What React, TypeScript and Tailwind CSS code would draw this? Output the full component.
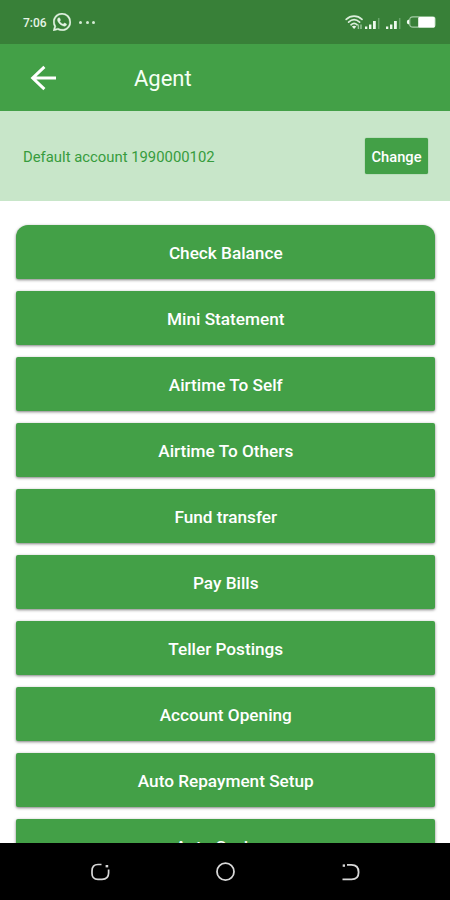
const actions = [
  "Check Balance",
  "Mini Statement",
  "Airtime To Self",
  "Airtime To Others",
  "Fund transfer",
  "Pay Bills",
  "Teller Postings",
  "Account Opening",
  "Auto Repayment Setup",
  "Auto Savings",
];

function WhatsAppIcon() {
  return (
    <svg className="ml-[6px] h-[18px] w-[18px]" viewBox="0 0 24 24" fill="#e3f3e3" stroke="#e3f3e3" strokeWidth="0.5">
      <path d="M17.472 14.382c-.297-.149-1.758-.867-2.03-.967-.273-.099-.471-.148-.67.15-.197.297-.767.966-.94 1.164-.173.199-.347.223-.644.075-.297-.15-1.255-.463-2.39-1.475-.883-.788-1.48-1.761-1.653-2.059-.173-.297-.018-.458.13-.606.134-.133.298-.347.446-.52.149-.174.198-.298.298-.497.099-.198.05-.371-.025-.52-.075-.149-.669-1.612-.916-2.207-.242-.579-.487-.5-.669-.51-.173-.008-.371-.01-.57-.01-.198 0-.52.074-.792.372-.272.297-1.04 1.016-1.04 2.479 0 1.462 1.065 2.875 1.213 3.074.149.198 2.096 3.2 5.077 4.487.709.306 1.262.489 1.694.625.712.227 1.36.195 1.871.118.571-.085 1.758-.719 2.006-1.413.248-.694.248-1.289.173-1.413-.074-.124-.272-.198-.57-.347m-5.421 7.403h-.004a9.87 9.87 0 01-5.031-1.378l-.361-.214-3.741.982.998-3.648-.235-.374a9.86 9.86 0 01-1.51-5.26c.001-5.45 4.436-9.884 9.888-9.884 2.64 0 5.122 1.03 6.988 2.898a9.825 9.825 0 012.893 6.994c-.003 5.45-4.437 9.884-9.885 9.884m8.413-18.297A11.815 11.815 0 0012.05 0C5.495 0 .16 5.335.157 11.892c0 2.096.547 4.142 1.588 5.945L.057 24l6.305-1.654a11.882 11.882 0 005.683 1.448h.005c6.554 0 11.89-5.335 11.893-11.893a11.821 11.821 0 00-3.48-8.413z" />
    </svg>
  );
}

function StatusIcons() {
  return (
    <svg className="mt-px h-[18px] w-[94px]" viewBox="0 0 94 18" fill="none">
      <g stroke="#dceedc" strokeWidth="1.7" strokeLinecap="round">
        <path d="M1.2 5.3C5.8 1 12.4 1 17 5.3" />
        <path d="M3.6 8.1C7 5 11.2 5 14.6 8.1" />
        <path d="M6 10.8C8 9 10.2 9 12.2 10.8" />
      </g>
      <path d="M6.9 12.6Q9.1 10.7 11.3 12.6L9.1 15.1Z" fill="#e8f5e8" />
      <path d="M13.4 10.5V15M16 10.5V15" stroke="#9cc69e" strokeWidth="1.4" />
      <g fill="#edf8ed">
        <path d="M20 12.5h2.3V15H20zM24 10.5h2.4V15H24zM28 7h2.8v8H28z" />
        <path d="M41 12.5h2.3V15H41zM45 10.5h2.4V15H45zM49 7h2.8v8H49z" />
      </g>
      <path d="M33.7 4V15M54.7 4V15" stroke="#68a46a" strokeWidth="1.5" />
      <path d="M68 2.8H87.5Q90 2.8 90 5.3V10.7Q90 13.2 87.5 13.2H68Q64.7 13.2 64.7 10V6Q64.7 2.8 68 2.8Z" stroke="#a4cba5" strokeWidth="1.2" />
      <path d="M64 5.4Q61.8 5.8 61.8 8Q61.8 10.2 64 10.6Z" fill="#f5fff5" />
      <rect x="73.2" y="3" width="16.6" height="10.6" rx="1.4" fill="#fff" />
    </svg>
  );
}

function NavigationBar() {
  return (
    <nav className="flex h-[57px] shrink-0 items-center justify-between bg-black px-[90px]">
      <svg className="h-5 w-5" viewBox="0 0 20 20" fill="none" stroke="#d8d8d8" strokeWidth="1.7">
        <path d="M11.5 2.5H8Q2 2.5 2 9V11.5Q2 17.3 8 17.3H12Q18.6 17.3 18.6 11V7.5" />
        <path d="M15.6 4.2H18.2" strokeWidth="2.4" />
      </svg>
      <svg className="h-5 w-5" viewBox="0 0 20 20" fill="none" stroke="#d8d8d8" strokeWidth="1.8">
        <circle cx="10.5" cy="9.7" r="8.5" />
      </svg>
      <svg className="h-5 w-5" viewBox="0 0 20 20" fill="none" stroke="#d8d8d8" strokeWidth="1.8">
        <path d="M7 2.8H11.5Q18.6 2.8 18.6 10.2Q18.6 17.3 11.5 17.3H2.5" />
        <path d="M2.7 3.6H5" strokeWidth="2.4" />
      </svg>
    </nav>
  );
}

export default function App() {
  return (
    <div className="flex h-[900px] w-[450px] flex-col overflow-hidden bg-white font-[Roboto,sans-serif]">
      <div className="flex h-11 shrink-0 items-center justify-between bg-[#388038] pr-[11px] pl-[23px]">
        <div className="flex items-center">
          <span className="w-6 pt-0.5 text-[12px] font-medium whitespace-nowrap text-[#e6f4e6]">7:06</span>
          <WhatsAppIcon />
          <div className="ml-2 flex gap-[3.5px]">
            <i className="h-[3px] w-[3px] rounded-full bg-[#d4ebd4]" />
            <i className="h-[3px] w-[3px] rounded-full bg-[#d4ebd4]" />
            <i className="h-[3px] w-[3px] rounded-full bg-[#d4ebd4]" />
          </div>
        </div>
        <StatusIcons />
      </div>
      <header className="flex h-[67px] shrink-0 items-center bg-[#43a047] pl-[30px]">
        <svg className="h-[26px] w-[27px]" viewBox="0 0 27 26" fill="none" stroke="#fff" strokeWidth="3">
          <path d="M14.4 1.8L2.7 13L14.4 24.2M2.7 13H26" />
        </svg>
        <h1 className="ml-[77px] pt-0.5 text-[22px] leading-none text-[#f5fff5]">Agent</h1>
      </header>
      <section className="flex h-[90px] shrink-0 items-center justify-between bg-[#c8e6c9] pr-[22px] pl-[23px]">
        <p className="pt-[3px] text-[14.85px] text-[#379c3d]">Default account 1990000102</p>
        <button className="h-9 w-[63px] rounded-[2px] bg-[#43a047] pt-0.5 text-[14.7px] font-medium text-white shadow-[0_0_1px_#388e3c]">
          Change
        </button>
      </section>
      <main className="flex min-h-0 flex-1 flex-col gap-3 overflow-hidden px-[15.5px] pt-6">
        {actions.map((label) => (
          <button
            key={label}
            className="h-[54px] shrink-0 rounded-[2px] bg-[#43a047] pt-1 pl-[1.5px] text-[17.2px] font-medium text-white shadow-[0_1px_3px_rgba(0,0,0,0.5)] first:rounded-t-[12px]"
          >
            {label}
          </button>
        ))}
      </main>
      <NavigationBar />
    </div>
  );
}
